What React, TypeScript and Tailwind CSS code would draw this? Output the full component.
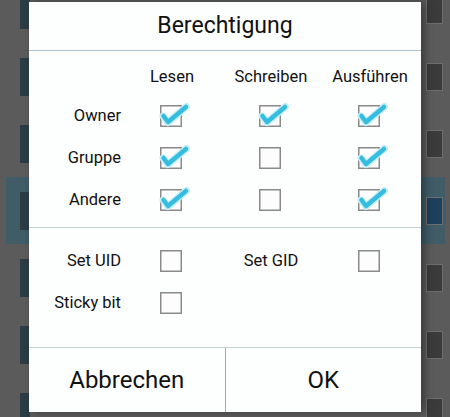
import React from 'react'

const font = { fontFamily: 'Roboto, "Noto Sans", sans-serif' }

const Check = ({ on }: { on: boolean }) => (
  <svg width="22" height="22" viewBox="0 0 22 22" className="overflow-visible">
    <rect x="0.75" y="0.75" width="20.5" height="20.5" fill="#fdfdfd" stroke="#8a8a8a" strokeWidth="1.5" />
    {on && (
      <>
        <polyline points="3,11 8,17.5 26.5,1.5" fill="none" stroke="#c6eef7" strokeWidth="7" strokeLinecap="round" strokeLinejoin="round" />
        <polyline points="3.5,11 8,17 26,2" fill="none" stroke="#35bde0" strokeWidth="4.5" strokeLinecap="round" strokeLinejoin="round" />
      </>
    )}
  </svg>
)

const rows: [string, boolean, boolean, boolean][] = [
  ['Owner', true, true, true],
  ['Gruppe', true, false, true],
  ['Andere', true, false, true],
]

const BgRow = ({ hl, last }: { hl?: boolean; last?: boolean }) => (
  <div className="h-[67px] flex items-center shrink-0">
    <div className={`h-full flex-1 flex items-center ml-[6px] mr-[5px] ${hl ? 'bg-[#3f5c67]' : ''}`}>
      <div className="w-[10px] h-[38px] bg-[#2b3c44] ml-[14px]" />
      {last && (
        <div className="flex text-[15px] text-[#2a2a2a] pt-[62px] ml-[23px]">
          <span>Owner:</span>
          <span className="ml-[69px]">root</span>
          <span className="ml-[117px]">Andere</span>
        </div>
      )}
      <div
        className={`w-[17px] h-[28px] border border-[#6e6e6e] ml-auto mr-[2px] ${hl ? 'bg-[#1f3f5e]' : 'bg-[#3b3b3b]'}`}
      />
    </div>
  </div>
)

export default function App() {
  return (
    <div className="relative w-[450px] h-[417px] overflow-hidden bg-[#5b5b5b]" style={font}>
      <div className="flex flex-col -mt-[24px]">
        <BgRow />
        <BgRow />
        <BgRow />
        <BgRow hl />
        <BgRow />
        <BgRow />
        <BgRow last />
      </div>

      <div className="absolute left-[29px] top-[2px] w-[392px] h-[410px] bg-[#fdfefe] flex flex-col text-[#111] shadow-[4px_0_8px_rgba(0,0,0,0.35)]">
        <div className="h-[48px] flex items-center justify-center text-[23px]">Berechtigung</div>
        <div className="h-px bg-[#a9c3c9]" />

        <div className="grid grid-cols-[92px_99px_99px_99px] text-[16.5px]">
          <div className="h-[44px]" />
          {['Lesen', 'Schreiben', 'Ausführen'].map((h) => (
            <div key={h} className="h-[44px] flex items-end justify-center pb-[5px] pl-[3px]">
              {h}
            </div>
          ))}
          {rows.map(([label, r, w, x]) => (
            <React.Fragment key={label}>
              <div className="h-[42px] flex items-center justify-end">{label}</div>
              {[r, w, x].map((v, i) => (
                <div key={i} className="h-[42px] flex items-center justify-center">
                  <Check on={v} />
                </div>
              ))}
            </React.Fragment>
          ))}
        </div>

        <div className="h-px bg-[#c4cfd1] mt-[6px]" />

        <div className="grid grid-cols-[92px_99px_99px_99px] text-[16.5px] pt-[12px]">
          <div className="h-[42px] flex items-center justify-end">Set UID</div>
          <div className="h-[42px] flex items-center justify-center">
            <Check on={false} />
          </div>
          <div className="h-[42px] flex items-center justify-center pl-[3px]">Set GID</div>
          <div className="h-[42px] flex items-center justify-center">
            <Check on={false} />
          </div>
          <div className="h-[42px] flex items-center justify-end">Sticky bit</div>
          <div className="h-[42px] flex items-center justify-center">
            <Check on={false} />
          </div>
        </div>

        <div className="h-px bg-[#c4d2d4] mt-auto" />
        <div className="h-[64px] flex text-[24px]">
          <div className="flex-1 flex items-center justify-center">Abbrechen</div>
          <div className="w-px bg-[#86b2b8]" />
          <div className="flex-1 flex items-center justify-center">OK</div>
        </div>
      </div>
    </div>
  )
}
